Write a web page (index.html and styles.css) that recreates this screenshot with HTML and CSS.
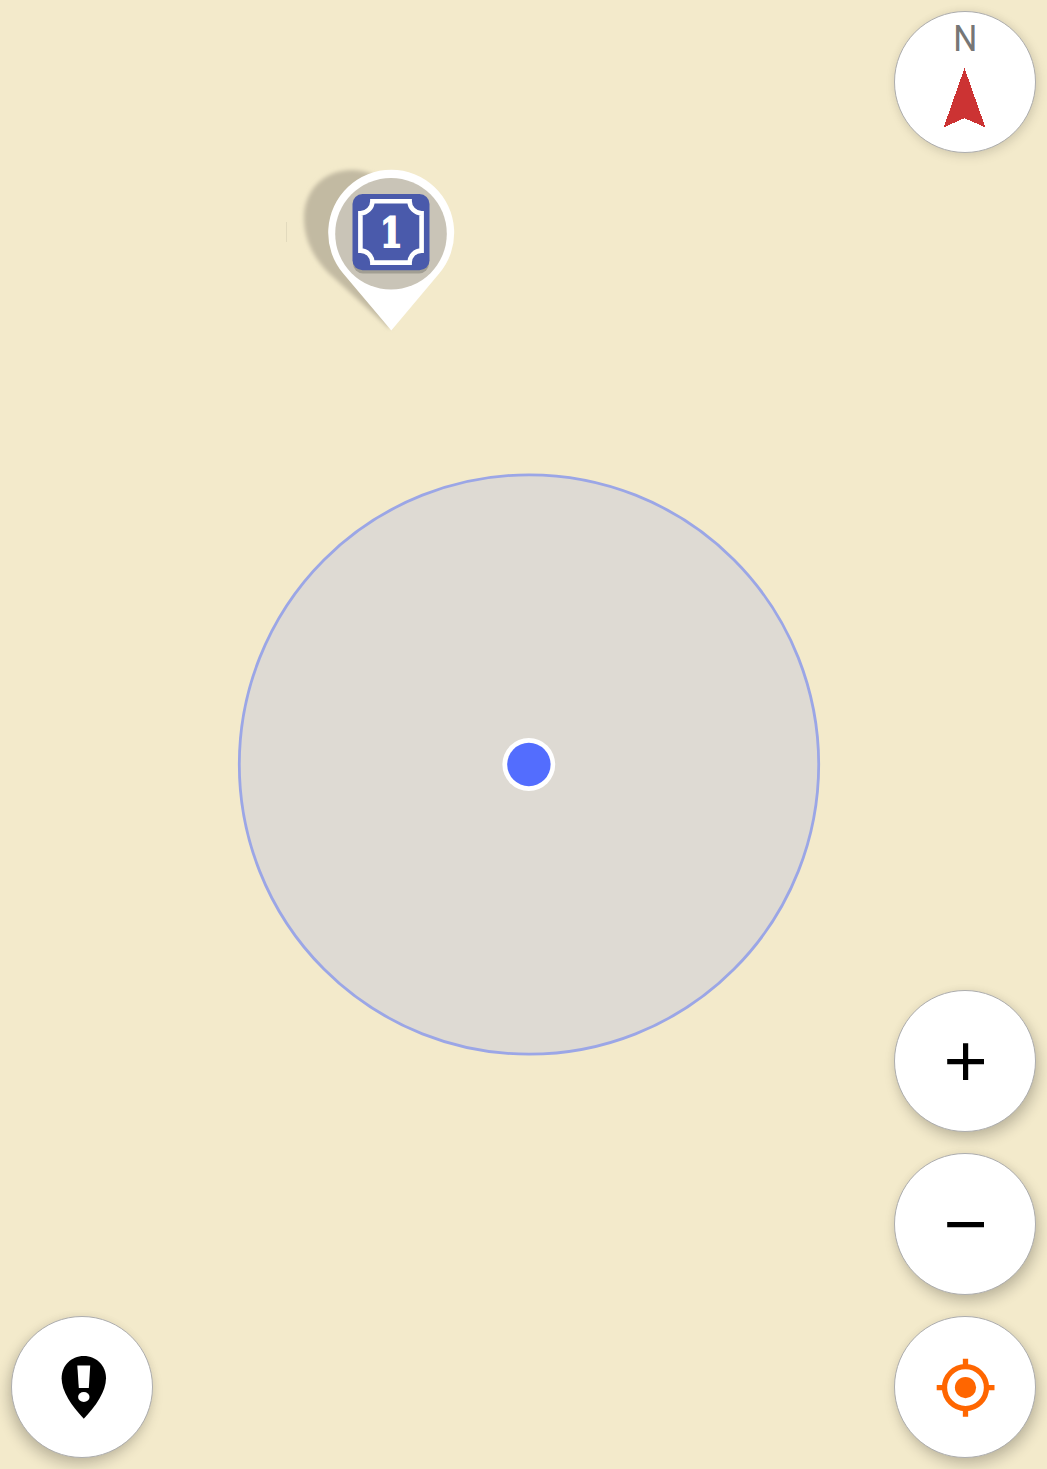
FILE: index.html
```html
<!DOCTYPE html>
<html lang="en">
<head>
<meta charset="utf-8">
<title>Map</title>
<link rel="stylesheet" href="styles.css">
</head>
<body>
<main class="map">
  <svg class="map-canvas" viewBox="0 0 1047 1469" aria-hidden="true">
    <defs>
      <filter id="soft" x="-20%" y="-20%" width="140%" height="140%"><feGaussianBlur stdDeviation="2"/></filter>
    </defs>
    <circle class="accuracy" cx="529" cy="764.5" r="289.7"/>
    <circle class="position-edge" cx="528.8" cy="764.5" r="26.4"/>
    <circle class="position" cx="528.9" cy="764.5" r="21.7"/>
    <path class="pin-tick" d="M286.500 222V242"/>
    <path class="pin-shadow" filter="url(#soft)" d="M390 329L333 277C314 260 304 240 304 218C304 190 324 170 352 170C378 170 400 190 400 220Z"/>
    <path class="pin" d="M391.3 330.5L343 273.300A63 63 0 1 1 439.400 273.300Z"/>
    <circle class="pin-window" cx="391" cy="233.7" r="55.8"/>
    <rect class="badge-shadow" x="353" y="197" width="76" height="76.5" rx="10"/>
    <rect class="badge" x="352.5" y="194" width="77" height="76.3" rx="10"/>
    <path class="badge-frame" d="M372.4 201.2H409.6A12 12 0 0 0 421.6 213.2V250.6A12 12 0 0 0 409.6 262.6H372.4A12 12 0 0 0 360.4 250.6V213.2A12 12 0 0 0 372.4 201.2Z"/>
    <text class="badge-number" transform="translate(391.2 247) scale(.78 1)" text-anchor="middle">1</text>
  </svg>

  <div class="controls">
    <div class="column column-left">
      <button class="round round-left" aria-label="Report">
        <svg class="icon" viewBox="12 1317 140 140">
          <path d="M83.8 1356C71 1356 61.6 1365.8 61.6 1378.3C61.6 1391 71.5 1406 83.8 1418.8C96.1 1406 106 1391 106 1378.3C106 1365.8 96.6 1356 83.8 1356Z"/>
          <path class="knockout" d="M77.3 1365.4H90.2L88.8 1388H78.8Z"/>
          <ellipse class="knockout" cx="83.8" cy="1397" rx="5.7" ry="5"/>
        </svg>
      </button>
    </div>
    <div class="column column-right">
      <button class="round round-top" aria-label="Compass">
        <svg class="icon" viewBox="895 12 140 140">
          <text class="north" transform="translate(965.3 51) scale(.9 1)" text-anchor="middle">N</text>
          <path class="needle" d="M964.5 68L985.3 127.3L964.5 118.2L943.7 127.3Z"/>
        </svg>
      </button>
      <div class="stack">
        <button class="round" aria-label="Zoom in">
          <svg class="icon" viewBox="895 991 140 140"><path d="M947.2 1059H963V1043.2H968.2V1059H984V1064.2H968.2V1080H963V1064.2H947.2Z"/></svg>
        </button>
        <button class="round" aria-label="Zoom out">
          <svg class="icon" viewBox="895 1154 140 140"><path d="M947.2 1222H984V1227.2H947.2Z"/></svg>
        </button>
        <button class="round" aria-label="My location">
          <svg class="icon locate" viewBox="895 1317 140 140">
            <circle cx="965.5" cy="1387.6" r="21"/>
            <path d="M965.5 1358.7V1368M965.5 1407.5V1416.7M936.7 1387.6H946M985 1387.6H994.5"/>
            <circle class="locate-dot" cx="965.5" cy="1387.6" r="10.6"/>
          </svg>
        </button>
      </div>
    </div>
  </div>
</main>
</body>
</html>
```
FILE: styles.css
```css
* { box-sizing: border-box; }
body { margin: 0; background: #f3eacb; }

.map {
  display: grid;
  width: 1047px;
  height: 1469px;
  overflow: hidden;
  background: #f3eacb;
}
.map-canvas, .controls { grid-area: 1 / 1; }
.map-canvas { display: block; width: 1047px; height: 1469px; }

.accuracy { fill: #dedad3; stroke: #9ba6e6; stroke-width: 2.8; }
.position-edge { fill: #fff; }
.position { fill: #536dfe; }
.pin-tick { stroke: #e2dabd; stroke-width: 1; }
.pin-shadow { fill: #c2baa2; }
.pin { fill: #fff; }
.pin-window { fill: #c9c4b7; }
.badge-shadow { fill: #a19e93; }
.badge { fill: #4a5aab; }
.badge-frame { fill: none; stroke: #fff; stroke-width: 4.6; }
.badge-number {
  fill: #fff;
  stroke: #fff;
  stroke-width: 1.8;
  font: bold 41.5px "DejaVu Serif", serif;
}

.controls {
  z-index: 1;
  display: flex;
  justify-content: space-between;
  padding: 11px;
}
.column { display: flex; flex-direction: column; }
.column-left { justify-content: flex-end; }
.column-right { justify-content: space-between; }
.stack { display: flex; flex-direction: column; gap: 21px; }

.round {
  display: block;
  width: 142px;
  height: 142px;
  padding: 0;
  border: 1px solid #adadad;
  border-radius: 50%;
  background: #fff;
  box-shadow: 3px 7px 14px rgba(0, 0, 0, .2), 0 0 8px rgba(0, 0, 0, .05);
}
.round-left { box-shadow: -3px 7px 14px rgba(0, 0, 0, .2), 0 0 8px rgba(0, 0, 0, .05); }
.round-top { box-shadow: 2px 3px 12px rgba(0, 0, 0, .12), 0 0 8px rgba(0, 0, 0, .05); }

.icon { display: block; width: 140px; height: 140px; }
.knockout { fill: #fff; }
.north { fill: #767676; font: 37.5px Roboto, sans-serif; }
.needle { fill: #c33; shape-rendering: crispEdges; }
.locate { fill: none; stroke: #f60; stroke-width: 5.3; }
.locate-dot { fill: #f60; stroke: none; }
```
